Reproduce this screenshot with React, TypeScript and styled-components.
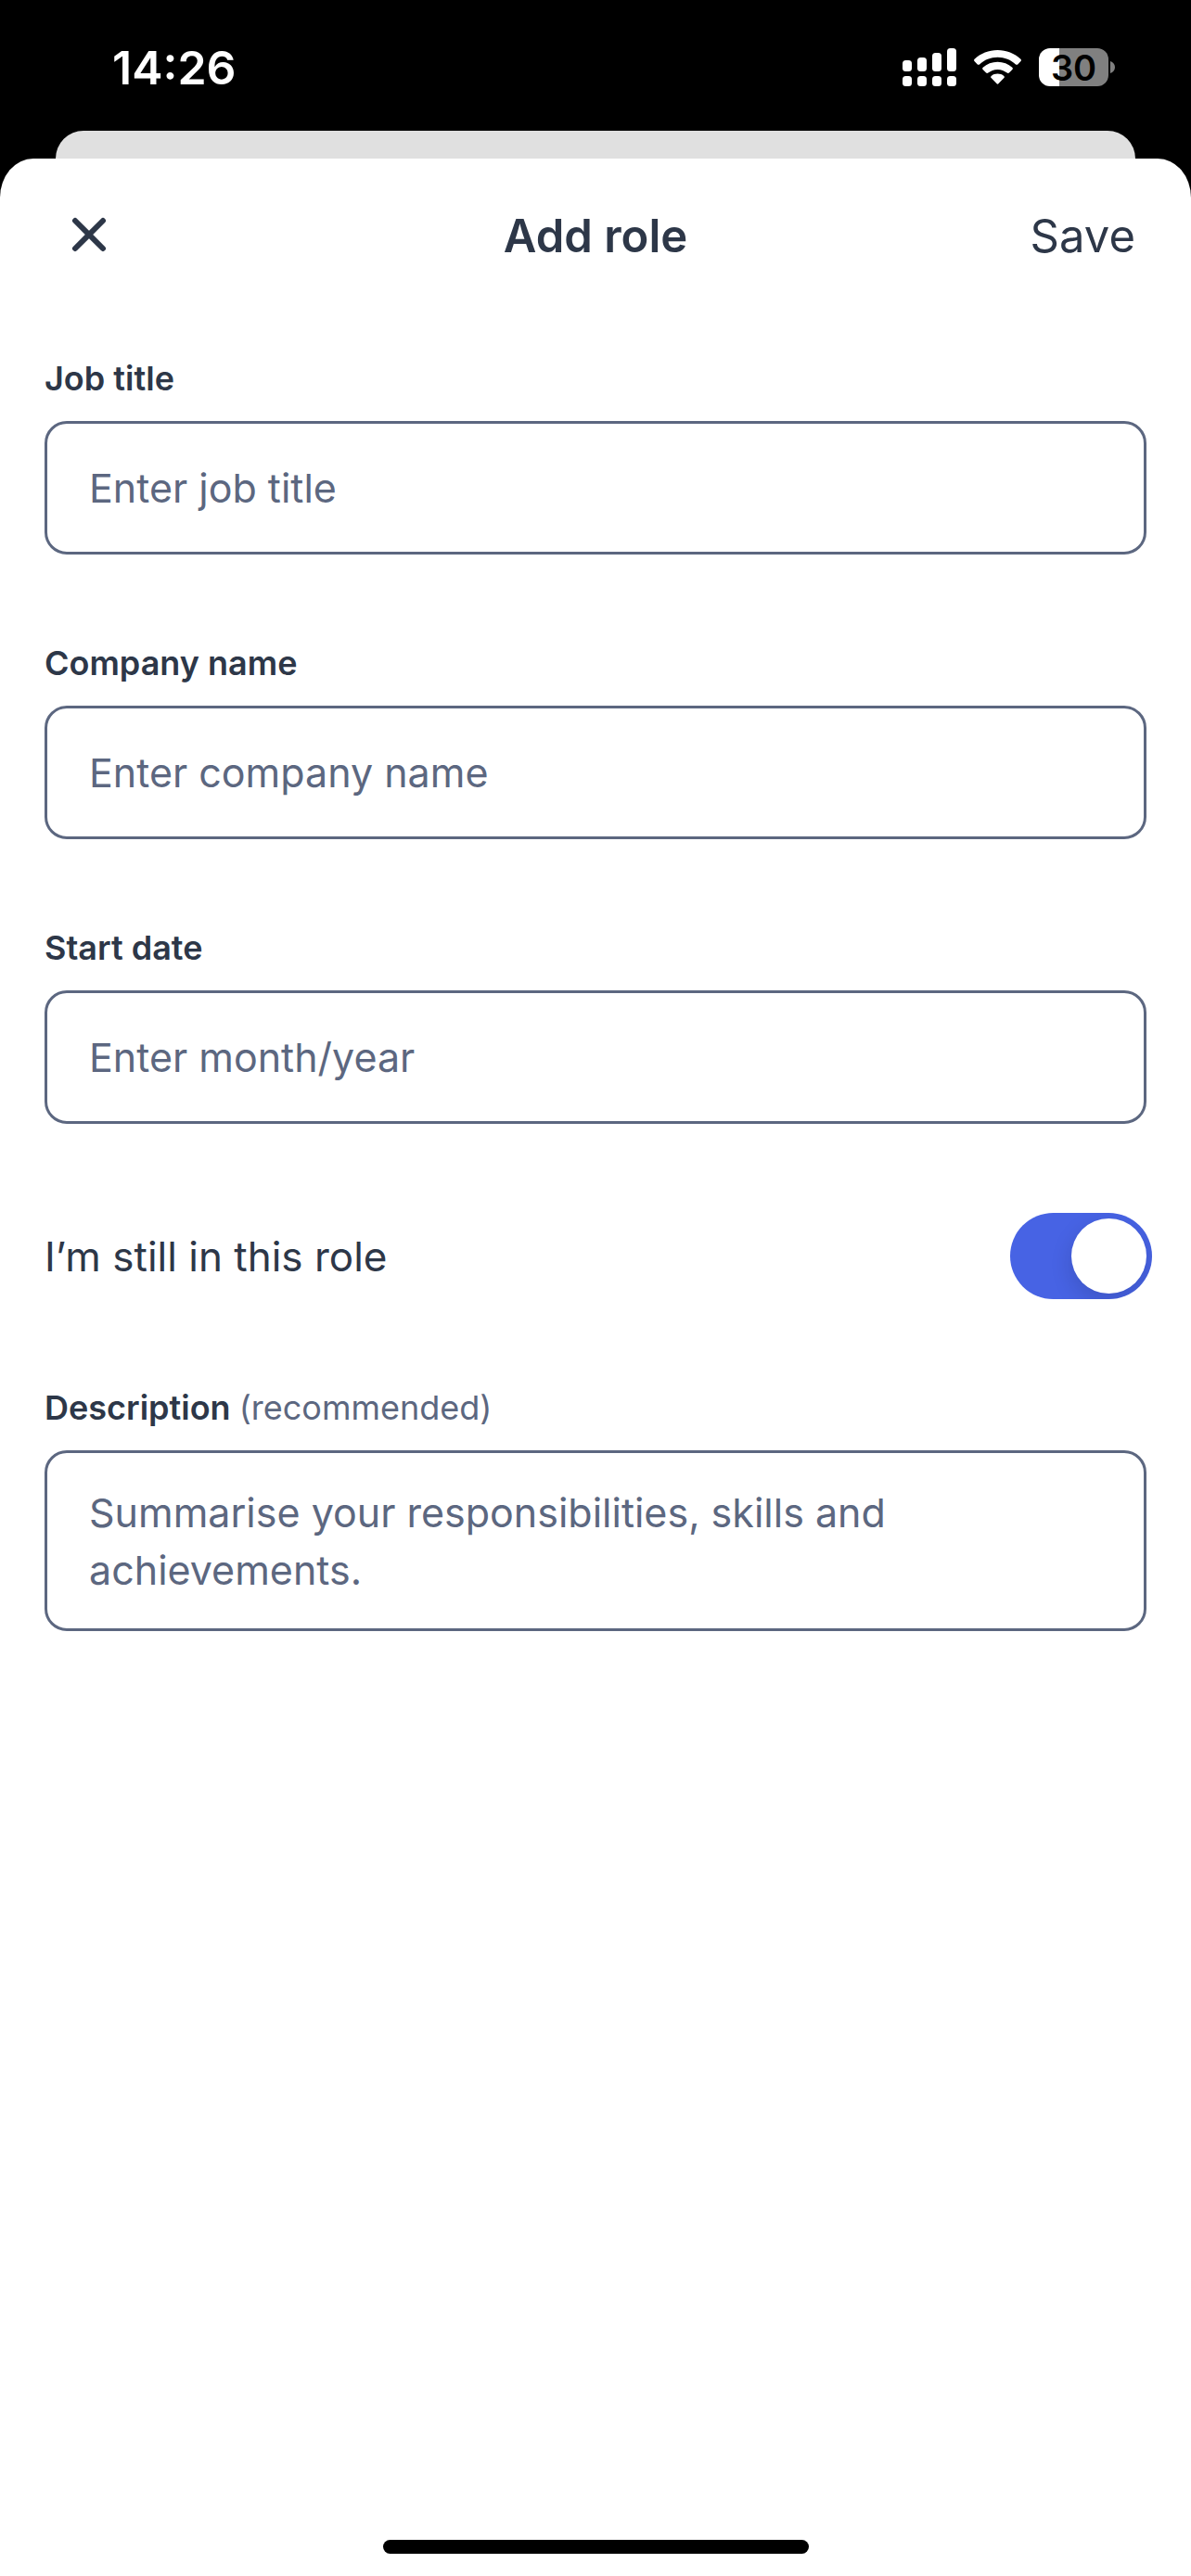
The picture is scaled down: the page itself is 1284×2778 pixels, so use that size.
import React, { useId, useState } from "react";
import styled, { createGlobalStyle } from "styled-components";

const ink = "#2d3748";
const slate = "#5c6780";
const accent = "#4763e4";

const GlobalStyle = createGlobalStyle`
  *, *::before, *::after { box-sizing: border-box; }
  body {
    margin: 0;
    background: #000;
    color: ${ink};
    font-family: Inter, "Liberation Sans", sans-serif;
  }
  button, input, textarea { font: inherit; color: inherit; }
`;

const Screen = styled.div`
  min-height: 100vh;
  display: flex;
  flex-direction: column;
`;

const StatusBar = styled.header`
  height: 141px;
  padding: 4px 82px 0 121px;
  display: flex;
  align-items: center;
  justify-content: space-between;
  color: #fff;
`;

const Clock = styled.time`
  font-size: 50px;
  line-height: 60px;
  font-weight: 600;
`;

const StatusIcons = styled.div`
  display: flex;
  align-items: center;
  gap: 19px;
`;

const BatteryGroup = styled.div`
  display: flex;
  align-items: center;
  gap: 2px;
`;

const Battery = styled.div<{ $level: number }>`
  width: 75px;
  height: 41px;
  border-radius: 12px;
  display: flex;
  align-items: center;
  justify-content: center;
  background: linear-gradient(to right, #fff ${(p) => p.$level}%, #808080 ${(p) => p.$level}%);
  color: #000;
  font-size: 38px;
  line-height: 40px;
  font-weight: 600;
`;

const BackCard = styled.div`
  height: 30px;
  margin: 0 60px;
  border-radius: 30px 30px 0 0;
  background: #e0e0e0;
`;

const Sheet = styled.main`
  flex: 1;
  display: flex;
  flex-direction: column;
  border-radius: 36px 36px 0 0 / 42px 42px 0 0;
  background: #fff;
`;

const SheetHeader = styled.div`
  height: 168px;
  padding: 0 60px;
  display: grid;
  grid-template-columns: 1fr auto 1fr;
  align-items: center;
`;

const Title = styled.h1`
  margin: 0;
  font-size: 49px;
  line-height: 60px;
  font-weight: 600;
`;

const PlainButton = styled.button<{ $end?: boolean }>`
  justify-self: ${(p) => (p.$end ? "end" : "start")};
  padding: 0;
  border: 0;
  background: none;
  display: flex;
  font-size: 49px;
  line-height: 60px;
  cursor: pointer;
`;

const Form = styled.form`
  padding: 48px;
  display: flex;
  flex-direction: column;
  gap: 96px;
`;

const Field = styled.div`
  display: flex;
  flex-direction: column;
  gap: 24px;
`;

const Label = styled.label`
  font-size: 36px;
  line-height: 43px;
  font-weight: 600;
`;

const Hint = styled.span`
  font-weight: 400;
  color: ${slate};
`;

const TextInput = styled.input`
  width: 100%;
  height: 144px;
  padding: 0 45px;
  border: 3px solid ${slate};
  border-radius: 24px;
  background: #fff;
  font-size: 43px;
  &::placeholder { color: ${slate}; opacity: 1; }
`;

const TextArea = styled.textarea`
  display: block;
  width: 100%;
  padding: 33px 45px 32px;
  border: 3px solid ${slate};
  border-radius: 24px;
  background: #fff;
  font-size: 43px;
  line-height: 62px;
  resize: none;
  overflow: hidden;
  &::placeholder { color: ${slate}; opacity: 1; }
`;

const SwitchRow = styled.div`
  margin-right: -6px;
  display: flex;
  align-items: center;
  justify-content: space-between;
`;

const SwitchLabel = styled.label`
  font-size: 44px;
  line-height: 62px;
`;

const Switch = styled.input`
  appearance: none;
  width: 153px;
  height: 93px;
  margin: 0;
  padding: 6px;
  border-radius: 47px;
  display: flex;
  justify-content: flex-start;
  overflow: hidden;
  background: #e2e5ea;
  cursor: pointer;
  &::before {
    content: "";
    width: 81px;
    height: 81px;
    border-radius: 50%;
    background: #fff;
    box-shadow: 0 9px 24px rgba(0, 0, 0, 0.14);
  }
  &:checked {
    justify-content: flex-end;
    background: ${accent};
  }
`;

const HomeArea = styled.footer`
  margin-top: auto;
  padding-bottom: 24px;
  display: flex;
  justify-content: center;
`;

const HomeIndicator = styled.div`
  width: 459px;
  height: 15px;
  border-radius: 8px;
  background: #000;
`;

const bars = [
  { x: 0, y: 13 },
  { x: 16, y: 10 },
  { x: 32, y: 5 },
  { x: 48, y: 0 },
];

function SignalIcon() {
  return (
    <svg width="58" height="41" viewBox="0 0 58 41" fill="#fff" aria-hidden="true">
      {bars.map((b) => (
        <React.Fragment key={b.x}>
          <rect x={b.x} y={b.y} width="10" height={25 - b.y} rx="3.5" />
          <rect x={b.x} y="30" width="10" height="11" rx="3.5" />
        </React.Fragment>
      ))}
    </svg>
  );
}

function WifiIcon() {
  return (
    <svg width="51" height="37" viewBox="0 0 51 37" fill="#fff" aria-hidden="true">
      <path d="M25.5 0C35 0 43.7 3.6 50.4 9.7c.7.7.7 1.6.1 2.3l-3.3 3.4c-.6.6-1.5.6-2.2 0C39.8 10.5 33 7.7 25.5 7.7S11.2 10.5 6 15.4c-.7.6-1.6.6-2.2 0L.5 12c-.6-.7-.6-1.600.1-2.300C7.300 3.600 16 0 25.500 0Z" />
      <path d="M25.5 12.8c6 0 11.5 2.2 15.8 5.9.7.6.7 1.6.1 2.3l-3.5 3.5c-.6.6-1.5.6-2.2.1-2.8-2.3-6.3-3.7-10.2-3.7s-7.4 1.4-10.2 3.7c-.7.5-1.6.5-2.2-.1L9.6 21c-.6-.7-.6-1.7.1-2.3 4.3-3.7 9.8-5.9 15.8-5.9Z" />
      <path d="M25.5 25.6c2.6 0 4.9.8 6.8 2.3.7.6.7 1.5.1 2.2l-5.8 6c-.6.7-1.6.7-2.2 0l-5.8-6c-.6-.7-.6-1.6.1-2.2 1.9-1.5 4.2-2.3 6.8-2.3Z" />
    </svg>
  );
}

function BatteryCap() {
  return (
    <svg width="5" height="13" viewBox="0 0 5 13" fill="#808080" aria-hidden="true">
      <path d="M0 0C3 1 5 3.500 5 6.500S3 12 0 13Z" />
    </svg>
  );
}

function CloseIcon() {
  return (
    <svg width="72" height="72" viewBox="0 0 72 72" fill="none" stroke={ink} strokeWidth="6" strokeLinecap="round" aria-hidden="true">
      <path d="M21 19 51 49M51 19 21 49" />
    </svg>
  );
}

function TextField({ label, placeholder }: { label: string; placeholder: string }) {
  const id = useId();
  return (
    <Field>
      <Label htmlFor={id}>{label}</Label>
      <TextInput id={id} type="text" placeholder={placeholder} />
    </Field>
  );
}

export default function App() {
  const [current, setCurrent] = useState(true);
  return (
    <>
      <GlobalStyle />
      <Screen>
        <StatusBar>
          <Clock>14:26</Clock>
          <StatusIcons>
            <SignalIcon />
            <WifiIcon />
            <BatteryGroup>
              <Battery $level={30}>30</Battery>
              <BatteryCap />
            </BatteryGroup>
          </StatusIcons>
        </StatusBar>
        <BackCard />
        <Sheet>
          <SheetHeader>
            <PlainButton type="button" aria-label="Close">
              <CloseIcon />
            </PlainButton>
            <Title>Add role</Title>
            <PlainButton type="submit" form="role-form" $end>
              Save
            </PlainButton>
          </SheetHeader>
          <Form id="role-form" onSubmit={(e) => e.preventDefault()}>
            <TextField label="Job title" placeholder="Enter job title" />
            <TextField label="Company name" placeholder="Enter company name" />
            <TextField label="Start date" placeholder="Enter month/year" />
            <SwitchRow>
              <SwitchLabel htmlFor="current-role">I’m still in this role</SwitchLabel>
              <Switch
                id="current-role"
                type="checkbox"
                role="switch"
                checked={current}
                onChange={(e) => setCurrent(e.target.checked)}
              />
            </SwitchRow>
            <Field>
              <Label htmlFor="description">
                Description <Hint>(recommended)</Hint>
              </Label>
              <TextArea
                id="description"
                rows={2}
                placeholder="Summarise your responsibilities, skills and achievements."
              />
            </Field>
          </Form>
          <HomeArea>
            <HomeIndicator />
          </HomeArea>
        </Sheet>
      </Screen>
    </>
  );
}
